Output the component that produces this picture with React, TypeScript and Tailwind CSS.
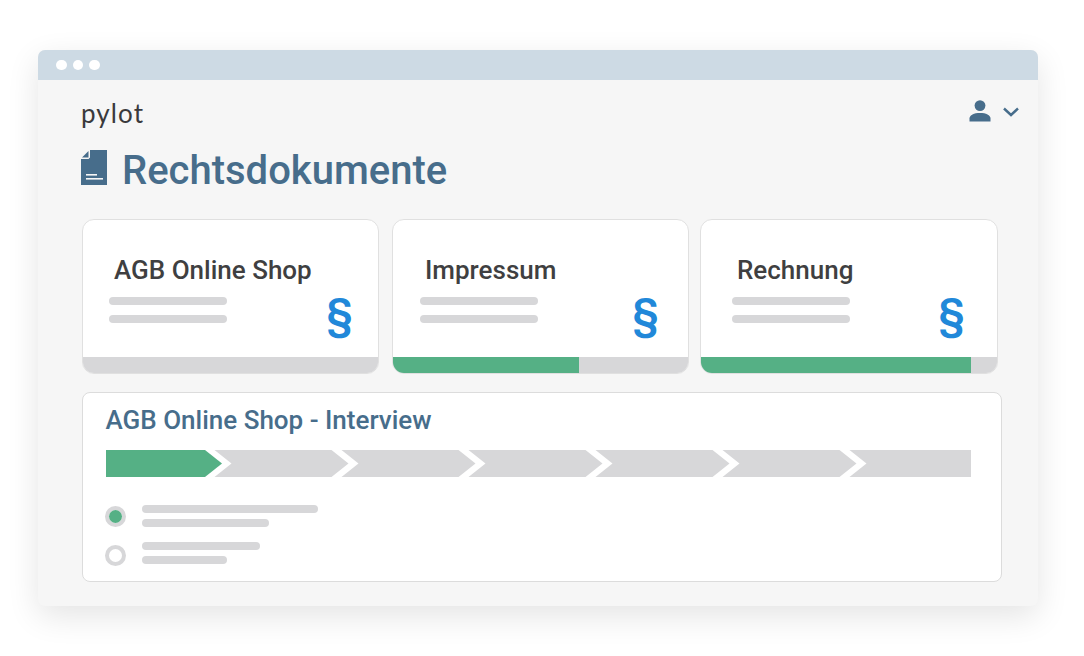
const cards = [
  { title: 'AGB Online Shop', cardClass: 'w-[297px]', titleClass: 'pl-[31px]', iconClass: 'mr-[25px]', linesClass: 'pl-[25.5px]', progress: 0 },
  { title: 'Impressum', cardClass: 'w-[297px]', titleClass: 'pl-[32px]', iconClass: 'mr-[29px]', linesClass: 'pl-[27px]', progress: 187 },
  { title: 'Rechnung', cardClass: '-ml-[2px] w-[298px]', titleClass: 'pl-[36px]', iconClass: 'mr-[32px]', linesClass: 'pl-[31px]', progress: 271 },
];

function Line({ className }: { className: string }) {
  return <div className={`h-2 rounded-full bg-[#d7d7d9] ${className}`} />;
}

function Card({ card }: { card: (typeof cards)[number] }) {
  return (
    <div className={`flex h-[155px] flex-col overflow-hidden rounded-[12px] border border-[#e0e0e0] bg-white ${card.cardClass}`}>
      <div className="flex-1">
        <h2 className={`mt-[33px] text-[26px] font-medium leading-[34px] text-[#3f3f41] ${card.titleClass}`}>
          {card.title}
        </h2>
        <div className="flex items-start justify-between">
          <div className={`mt-[10px] flex flex-col gap-[9.5px] ${card.linesClass}`}>
            <Line className="w-[118px]" />
            <Line className="w-[118px]" />
          </div>
          <span className={`text-[43px] font-semibold leading-[52px] text-[#2188d9] ${card.iconClass}`}>§</span>
        </div>
      </div>
      <div className="-mx-px -mb-px h-[17px] bg-[#d7d7d9]">
        <div className="h-full bg-[#55b085]" style={{ width: card.progress }} />
      </div>
    </div>
  );
}

function Steps() {
  const steps = [0, 1, 2, 3, 4, 5];
  return (
    <svg width="866" height="27" viewBox="0 0 866 27" className="mt-[14px] block">
      <polygon points="0,0 99,0 116,13.5 99,27 0,27" fill="#55b085" />
      {steps.map((i) => {
        const x = 108.5 + i * 127;
        if (i === 5) {
          return <polygon key={i} points={`${x},0 865,0 865,27 ${x},27 ${x + 17},13.5`} fill="#d7d7d9" />;
        }
        return (
          <polygon
            key={i}
            points={`${x},0 ${x + 117},0 ${x + 134},13.5 ${x + 117},27 ${x},27 ${x + 17},13.5`}
            fill="#d7d7d9"
          />
        );
      })}
    </svg>
  );
}

function Radio({ on, className }: { on?: boolean; className: string }) {
  return (
    <div className={`flex h-[21px] w-[21px] items-center justify-center rounded-full border-[4px] border-[#d7d7d9] bg-white ${className}`}>
      {on && <div className="h-[13px] w-[13px] shrink-0 rounded-full bg-[#55b085]" />}
    </div>
  );
}

export default function App() {
  return (
    <div className="h-[656px] w-[1084px] overflow-hidden bg-white pl-[38px] pt-[50px] font-['Roboto',sans-serif]">
      <div className="h-[556px] w-[1000px] overflow-hidden rounded-[7px] bg-[#f6f6f6] shadow-[0_10px_32px_rgba(0,0,0,0.11)]">
        <div className="flex h-[30px] items-center gap-[6px] bg-[#cddae4] pl-[18px]">
          <span className="h-[10.5px] w-[10.5px] rounded-full bg-white" />
          <span className="h-[10.5px] w-[10.5px] rounded-full bg-white" />
          <span className="h-[10.5px] w-[10.5px] rounded-full bg-white" />
        </div>

        <div className="flex items-start justify-between pl-[43px] pr-[19px]">
          <span className="mt-[17px] font-['Lato',sans-serif] text-[26px] font-normal leading-[32px] tracking-[1.1px] text-[#3a3a3c]">
            pylot
          </span>
          <div className="mt-[20px] flex items-center gap-[12px]">
            <svg width="22" height="22" viewBox="0 0 22 22" fill="#476d8b">
              <circle cx="11" cy="5.6" r="5.4" />
              <path d="M0.5 21.5 V18.6 C0.5 15 5 13 11 13 C17 13 21.5 15 21.5 18.6 V21.5 Z" />
            </svg>
            <svg width="16" height="10" viewBox="0 0 16 10" fill="none" stroke="#476d8b" strokeWidth="2.4" className="mt-[2px]">
              <path d="M1 1.5 L8 8 L15 1.5" />
            </svg>
          </div>
        </div>

        <div className="mt-[21px] flex items-start pl-[43px]">
          <svg width="26" height="35" viewBox="0 0 26 35" fill="#476d8b">
            <path d="M9 0 H26 V35 H0 V9 H7.5 L9 7.5 Z" />
            <path d="M7.5 1 V7.5 H1 Z" />
            <rect x="5" y="24" width="11" height="1.6" fill="#f6f6f6" />
            <rect x="5" y="28" width="17" height="1.6" fill="#f6f6f6" />
          </svg>
          <h1 className="ml-[15px] mt-[2px] text-[40px] font-medium leading-[38px] text-[#476d8b]">Rechtsdokumente</h1>
        </div>

        <div className="ml-[44px] mt-[29px] flex gap-[13px]">
          {cards.map((card) => (
            <Card key={card.title} card={card} />
          ))}
        </div>

        <div className="ml-[44px] mt-[18px] h-[190px] w-[920px] rounded-[8px] border border-[#dcdcdc] bg-white pl-[22.5px]">
          <h2 className="mt-[11px] text-[26px] font-medium leading-[32px] text-[#476d8b]">AGB Online Shop - Interview</h2>
          <div className="pl-[0.5px]">
            <Steps />
          </div>
          <div className="mt-[28px] flex flex-col gap-[15px]">
            <div className="flex items-center gap-[16px]">
              <Radio on className="-ml-px" />
              <div className="flex flex-col gap-[6px]">
                <Line className="w-[176px]" />
                <Line className="w-[127px]" />
              </div>
            </div>
            <div className="flex items-start gap-[16px]">
              <Radio className="-ml-px mt-[3px]" />
              <div className="flex flex-col gap-[6px]">
                <Line className="w-[118px]" />
                <Line className="w-[85px]" />
              </div>
            </div>
          </div>
        </div>
      </div>
    </div>
  );
}
